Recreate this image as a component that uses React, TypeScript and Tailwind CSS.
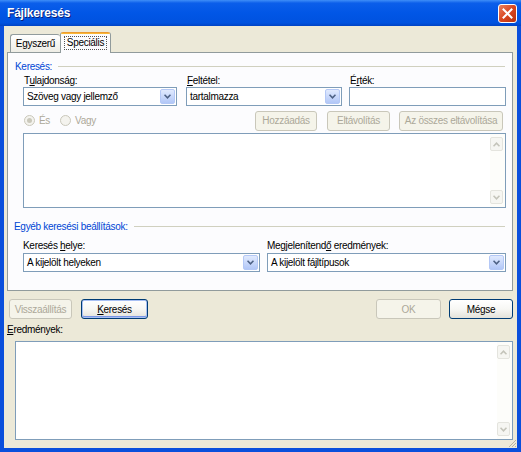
import React from "react";

// XP "Luna" stílusú Fájlkeresés párbeszédablak
const ff = "font-['Tahoma','Liberation_Sans',Arial,sans-serif]";

function Chevron({ up = false, className = "" }: { up?: boolean; className?: string }) {
  return (
    <svg width="7" height="5" viewBox="0 0 7 5" className={className}>
      <path
        d={up ? "M0.5 4.3 L3.5 1.2 L6.5 4.3" : "M0.5 0.7 L3.5 3.8 L6.5 0.7"}
        fill="none"
        stroke="currentColor"
        strokeWidth="1.6"
      />
    </svg>
  );
}

function Combo({ value, className = "" }: { value: string; className?: string }) {
  return (
    <div className={`flex h-[19px] items-stretch border border-[#7F9DB9] bg-white p-px ${className}`}>
      <span className="flex flex-1 items-center truncate pl-[2px]">{value}</span>
      <div className="flex w-[15px] items-center justify-center rounded-[2px] border border-[#B4C8F6] bg-gradient-to-b from-[#E1EAFE] to-[#B2C7F7] text-[#4D6185]">
        <Chevron />
      </div>
    </div>
  );
}

function Btn({
  children,
  disabled = false,
  primary = false,
  className = "",
}: {
  children: React.ReactNode;
  disabled?: boolean;
  primary?: boolean;
  className?: string;
}) {
  return (
    <div
      className={`flex h-[20px] items-center justify-center rounded-[3px] border ${
        disabled
          ? "border-[#C9C7BA] bg-[#F5F4EA] text-[#ACA899]"
          : "border-[#003C74] bg-gradient-to-b from-white via-[#F7F7F4] to-[#E3E2DA] text-black"
      } ${primary ? "shadow-[inset_0_0_0_1px_#A8C0F4,inset_0_-1px_0_1px_#7A96E6]" : ""} ${className}`}
    >
      {children}
    </div>
  );
}

function ScrollCol() {
  // letiltott görgetősáv
  return (
    <div className="flex w-[15px] flex-col justify-between bg-[#FDFDFA] py-[3px] pr-[1px]">
      <div className="flex h-[14px] w-[13px] items-center justify-center rounded-[2px] border border-[#E4E4DE] bg-[#F6F6F2] text-[#C4C4BA]">
        <Chevron up />
      </div>
      <div className="flex h-[14px] w-[13px] items-center justify-center rounded-[2px] border border-[#E4E4DE] bg-[#F6F6F2] text-[#C4C4BA]">
        <Chevron />
      </div>
    </div>
  );
}

function Radio({ checked = false, label }: { checked?: boolean; label: string }) {
  return (
    <div className="flex items-center gap-[4px] text-[#ACA899]">
      <div className="flex h-[11px] w-[11px] items-center justify-center rounded-full border border-[#CAC8BB] bg-[#F4F3EE]">
        {checked && <div className="h-[5px] w-[5px] rounded-full bg-[#CAC8BB]" />}
      </div>
      <span>{label}</span>
    </div>
  );
}

function GroupHead({ title, className = "" }: { title: string; className?: string }) {
  return (
    <div className={`flex h-[13px] items-center pr-[7px] ${className}`}>
      <span className="text-[#0046D5]">{title}</span>
      <div className="ml-[6px] h-px flex-1 bg-[#D0D0BF]" />
    </div>
  );
}

export default function App() {
  return (
    <div className={`${ff} flex h-[452px] w-[521px] flex-col bg-[#0A4FDC] text-[10px] leading-[13px] tracking-[-0.3px] text-black`}>
      {/* címsor */}
      <div className="flex h-[26px] shrink-0 items-center justify-between bg-[linear-gradient(to_bottom,#3F8EF8_0%,#0B5EEA_12%,#0156E6_50%,#0052DF_88%,#0043C4_100%)] pl-[7px] pr-[4px]">
        <span className="text-[12px] font-bold tracking-[-0.2px] text-white [text-shadow:1px_1px_0_#0A1F7A]">
          Fájlkeresés
        </span>
        <div className="flex h-[19px] w-[19px] items-center justify-center rounded-[3px] border border-white bg-gradient-to-br from-[#E9805E] via-[#D9461F] to-[#B8320F]">
          <svg width="11" height="11" viewBox="0 0 11 11">
            <path d="M1.5 1.5 L9.5 9.5 M9.5 1.5 L1.5 9.5" stroke="white" strokeWidth="2" strokeLinecap="square" />
          </svg>
        </div>
      </div>

      {/* kliens terület */}
      <div className="relative mx-[4px] mb-[4px] flex flex-1 flex-col bg-[#ECE9D8] pt-[6px]">
        {/* fülek */}
        <div className="ml-[6px] flex h-[20px] items-end">
          <div className="flex h-[18px] w-[50px] items-center justify-center rounded-t-[3px] border-l border-t border-[#919B9C] bg-gradient-to-b from-white to-[#EEEDE5]">
            Egyszerű
          </div>
          <div className="relative z-10 -mb-px flex h-[21px] w-[51px] flex-col rounded-t-[3px] border-x border-[#919B9C] bg-[#FCFCFE]">
            <div className="h-[2px] rounded-t-[2px] bg-gradient-to-b from-[#E68B2C] to-[#FFC73C]" />
            <div className="flex flex-1 items-center justify-center pb-[1px]">
              <span className="border border-dotted border-[#555] px-[2px] leading-[12px]">Speciális</span>
            </div>
          </div>
        </div>

        {/* fül tartalma */}
        <div className="ml-[3px] flex h-[239px] w-[506px] flex-col border border-[#919B9C] bg-[#FCFCFE] pl-[7px]">
          <GroupHead title="Keresés:" className="mt-[7px]" />

          <div className="flex h-[14px] items-end pl-[9px]">
            <span className="w-[163px]">
              T<u>u</u>lajdonság:
            </span>
            <span className="w-[163px]">
              <u>F</u>eltétel:
            </span>
            <span>
              É<u>r</u>ték:
            </span>
          </div>

          <div className="flex pl-[8px]">
            <Combo value="Szöveg vagy jellemző" className="w-[154px]" />
            <Combo value="tartalmazza" className="ml-[9px] w-[156px]" />
            <div className="ml-[7px] h-[19px] w-[157px] border border-[#7F9DB9] bg-white" />
          </div>

          <div className="mt-[5px] flex h-[19px] items-center pl-[9px] pr-[9px]">
            <div className="flex gap-[10px]">
              <Radio checked label="És" />
              <Radio label="Vagy" />
            </div>
            <div className="ml-auto flex">
              <Btn disabled className="h-[19px] w-[62px]">
                Hozzáadás
              </Btn>
              <Btn disabled className="ml-[10px] h-[19px] w-[63px]">
                Eltávolítás
              </Btn>
              <Btn disabled className="ml-[9px] h-[19px] w-[104px]">
                Az összes eltávolítása
              </Btn>
            </div>
          </div>

          <div className="ml-[8px] mt-[3px] flex h-[75px] w-[483px] border border-[#7F9DB9] bg-white">
            <div className="flex-1" />
            <ScrollCol />
          </div>

          <GroupHead title="Egyéb keresési beállítások:" className="-ml-px mt-[12px]" />

          <div className="mt-[5px] flex h-[14px] items-end pl-[8px]">
            <span className="w-[244px]">
              Keresés <u>h</u>elye:
            </span>
            <span>
              Megjelenítend<u>ő</u> eredmények:
            </span>
          </div>

          <div className="mt-px flex pl-[8px]">
            <Combo value="A kijelölt helyeken" className="w-[237px]" />
            <Combo value="A kijelölt fájltípusok" className="ml-[7px] w-[239px]" />
          </div>
        </div>

        {/* gombsor */}
        <div className="mt-[8px] flex pl-[5px] pr-[4px]">
          <Btn disabled className="w-[63px]">
            Visszaállítás
          </Btn>
          <Btn primary className="ml-[9px] w-[67px]">
            <span>
              <u>K</u>eresés
            </span>
          </Btn>
          <Btn disabled className="ml-auto w-[65px]">
            OK
          </Btn>
          <Btn className="ml-[8px] w-[64px]">Mégse</Btn>
        </div>

        <div className="ml-[3px] mt-[4px] h-[13px]">
          <u>E</u>redmények:
        </div>

        <div className="ml-[11px] mt-[5px] flex h-[99px] w-[498px] border border-[#7F9DB9] bg-white">
          <div className="flex-1" />
          <ScrollCol />
        </div>

        {/* átméretező fogantyú */}
        <svg width="10" height="10" viewBox="0 0 10 10" className="absolute bottom-0 right-0">
          <path d="M9 2 L2 9 M9 5 L5 9 M9 8 L8 9" stroke="#B8B4A2" strokeWidth="1" />
        </svg>
      </div>
    </div>
  );
}
